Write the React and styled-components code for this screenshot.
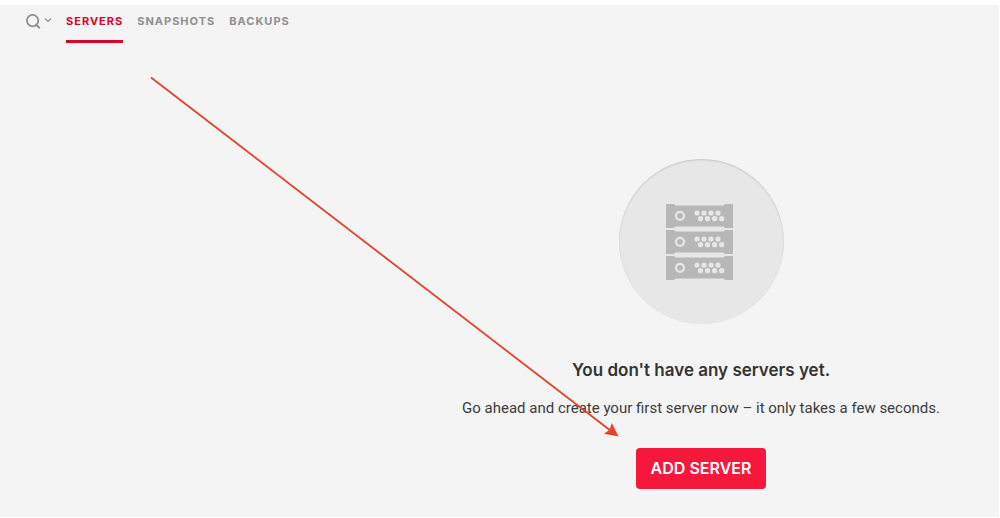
import styled, { createGlobalStyle } from "styled-components";

const GlobalStyle = createGlobalStyle`
    body {
        margin: 0;
        background: #ffffff;
        font-family: Roboto, "Liberation Sans", sans-serif;
    }
`;

const Page = styled.div`
    box-sizing: border-box;
    display: flex;
    flex-direction: column;
    min-height: 100vh;
    padding: 5px 1px 1px 0;
    position: relative;
`;

const Panel = styled.div`
    background: #f4f4f4;
    display: flex;
    flex: 1;
    flex-direction: column;
`;

const TopBar = styled.header`
    align-items: flex-start;
    display: flex;
    gap: 14px;
    padding: 0 26px;
`;

const SearchButton = styled.button`
    align-items: center;
    background: none;
    border: 0;
    color: #8f8f8f;
    display: flex;
    gap: 3px;
    height: 32px;
    padding: 0;
`;

const Tabs = styled.nav`
    display: flex;
    gap: 14px;
`;

const Tab = styled.a`
    border-bottom: 3px solid ${({ $active }) => ($active ? "#d9042b" : "transparent")};
    color: ${({ $active }) => ($active ? "#d9042b" : "#8f8f8f")};
    font-family: Inter, "Liberation Sans", sans-serif;
    font-size: 11px;
    font-weight: 700;
    height: 35px;
    letter-spacing: 1px;
    line-height: 32px;
    text-decoration: none;
`;

const EmptyState = styled.main`
    align-items: center;
    display: flex;
    flex-direction: column;
    padding: 116px 0 28px 403px;
    text-align: center;
`;

const IconCircle = styled.div`
    align-items: center;
    background: #e7e7e7;
    border-radius: 50%;
    box-shadow: inset 0 1px 2px rgba(0, 0, 0, 0.14);
    display: flex;
    height: 165px;
    justify-content: center;
    width: 165px;
`;

const Title = styled.h1`
    color: #333333;
    font-family: Inter, "Liberation Sans", sans-serif;
    font-size: 17px;
    font-weight: 600;
    line-height: 24px;
    margin: 34px 0 0;
`;

const Description = styled.p`
    color: #3c3c3c;
    font-size: 15px;
    line-height: 24px;
    margin: 14px 0 0;
`;

const AddButton = styled.button`
    background: #f5183b;
    border: 0;
    border-radius: 4px;
    color: #ffffff;
    font-family: Inter, "Liberation Sans", sans-serif;
    font-size: 16px;
    font-weight: 600;
    line-height: 41px;
    margin-top: 28px;
    padding: 0 15px;
`;

// lies over the page, must not catch clicks
const Pointer = styled.svg`
    left: 150px;
    pointer-events: none;
    position: absolute;
    top: 76px;
`;

const UNITS = [0, 26, 52];
const HOLES = [
    [31, 9],
    [38, 9],
    [45, 9],
    [52, 9],
    [34.5, 14.7],
    [41.5, 14.7],
    [48.6, 14.7],
    [55.7, 14.7],
];

const ServerIcon = () => (
    <svg width="71" height="76" viewBox="0 0 71 76" aria-hidden="true">
        {UNITS.map((y) => (
            <g key={y} transform={`translate(0 ${y})`}>
                <path
                    d="M0 0h8l1.5 1.5h48L59 0h8v24h-8l-1.5-1.5h-48L8 24H0z"
                    fill="#b7b7b7"
                />
                <circle cx="14" cy="11.8" r="4" fill="none" stroke="#e7e7e7" strokeWidth="2.2" />
                {HOLES.map(([cx, cy]) => (
                    <circle key={`${cx}-${cy}`} cx={cx} cy={cy} r="2.6" fill="#e7e7e7" />
                ))}
            </g>
        ))}
    </svg>
);

const SearchIcon = () => (
    <svg width="15" height="15" viewBox="0 0 15 15" fill="none" stroke="currentColor" aria-hidden="true">
        <circle cx="6.6" cy="6.6" r="5.7" strokeWidth="1.8" />
        <path d="M9.6 10.2l4.2 4" strokeWidth="2" />
    </svg>
);

const ChevronIcon = () => (
    <svg width="8" height="8" viewBox="0 0 8 8" fill="none" stroke="currentColor" aria-hidden="true">
        <path d="M1 1.5l3 3 3-3" strokeWidth="1.2" />
    </svg>
);

const TABS = ["SERVERS", "SNAPSHOTS", "BACKUPS"];

export default function App() {
    return (
        <>
            <GlobalStyle />
            <Page>
                <Panel>
                    <TopBar>
                        <SearchButton type="button" aria-label="Search">
                            <SearchIcon />
                            <ChevronIcon />
                        </SearchButton>
                        <Tabs>
                            {TABS.map((tab, index) => (
                                <Tab key={tab} href={`#${tab.toLowerCase()}`} $active={index === 0}>
                                    {tab}
                                </Tab>
                            ))}
                        </Tabs>
                    </TopBar>
                    <EmptyState>
                        <IconCircle>
                            <ServerIcon />
                        </IconCircle>
                        <Title>You don't have any servers yet.</Title>
                        <Description>
                            Go ahead and create your first server now – it only takes a few seconds.
                        </Description>
                        <AddButton type="button">ADD SERVER</AddButton>
                    </EmptyState>
                </Panel>
                <Pointer width="470" height="362" viewBox="0 0 470 362" aria-hidden="true">
                    <path d="M1 1.5L461 355" fill="none" stroke="#e8402f" strokeWidth="1.8" />
                    <path d="M468.5 360.5L454 357.8L459.5 353.8L461.8 347z" fill="#e8402f" />
                </Pointer>
            </Page>
        </>
    );
}
